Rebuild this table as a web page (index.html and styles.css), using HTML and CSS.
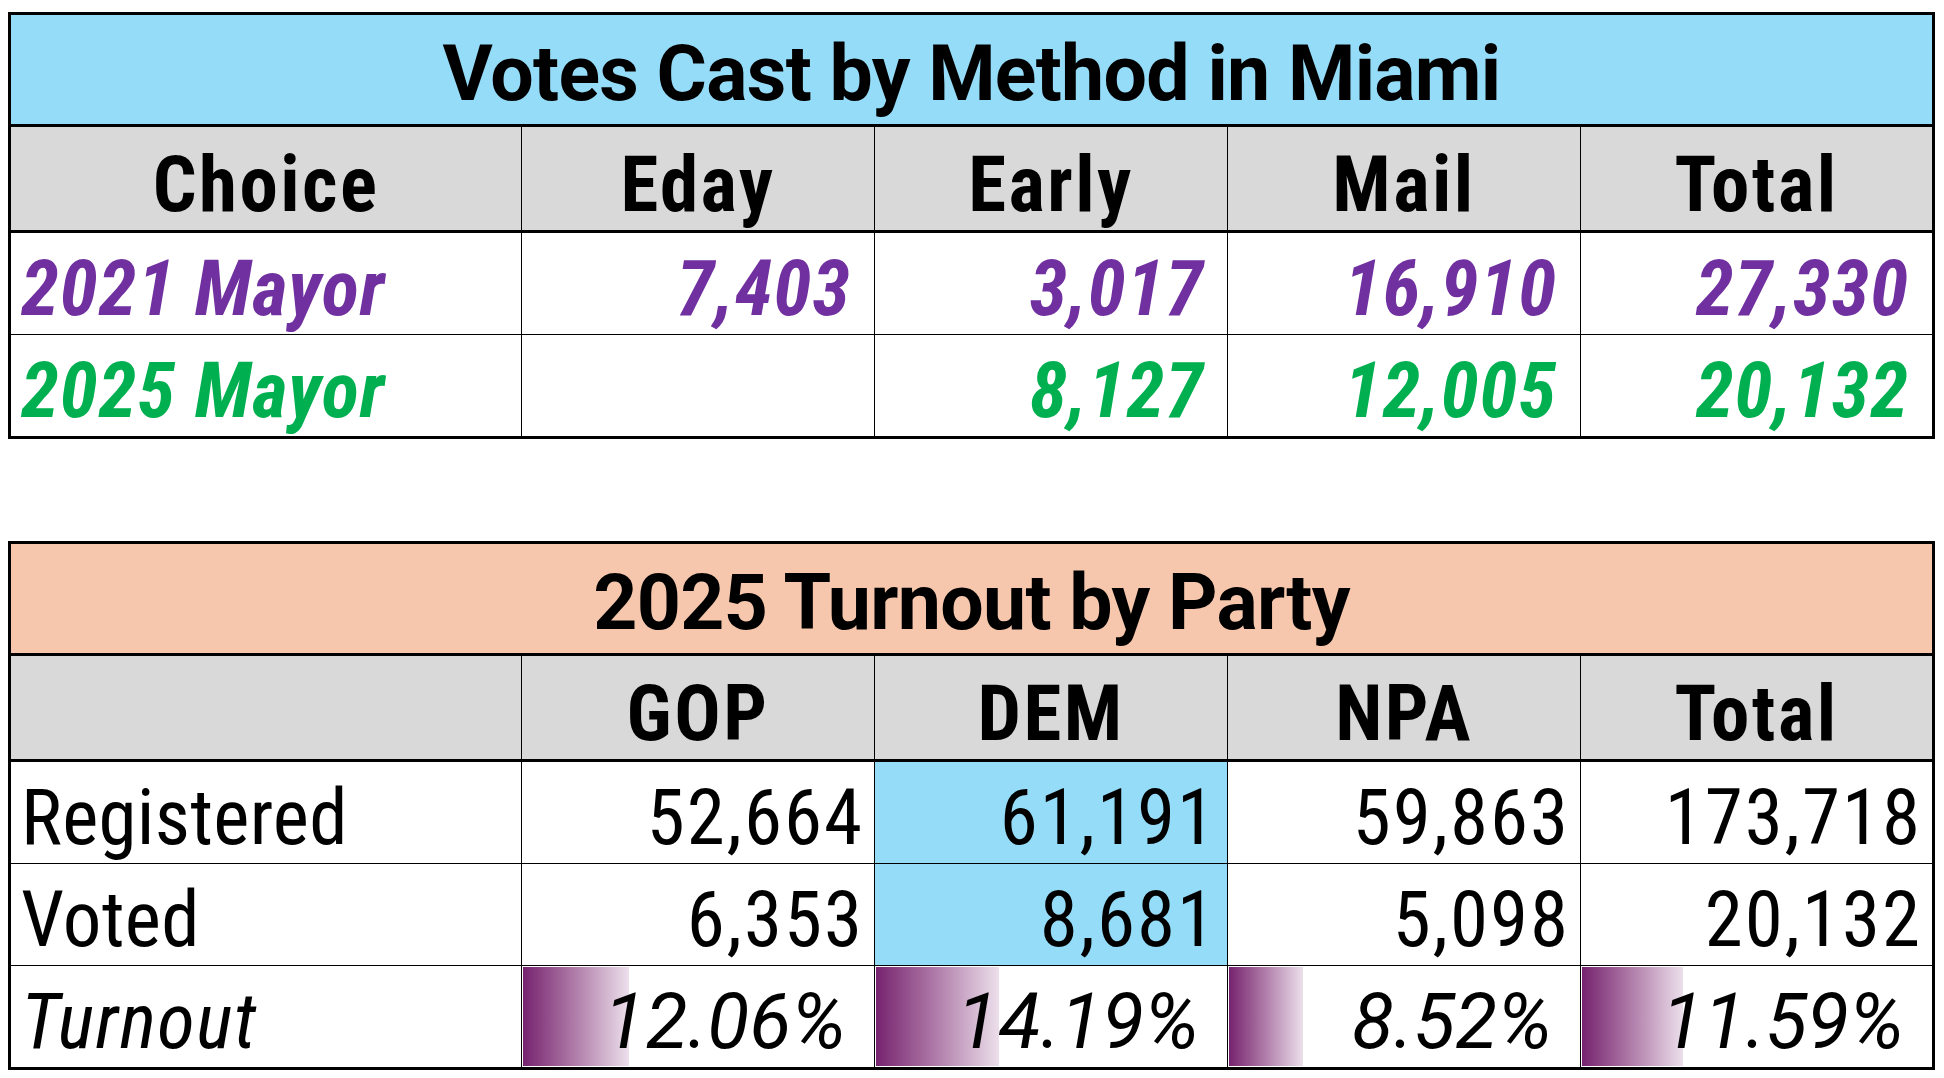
FILE: index.html
```html
<!DOCTYPE html>
<html lang="en">
<head>
<meta charset="utf-8">
<title>Votes Cast by Method in Miami</title>
<link rel="stylesheet" href="styles.css">
</head>
<body>
<div class="sheet">
  <div class="grid">
    <div class="title blue">Votes Cast by Method in Miami</div>
    <div class="hd first">Choice</div>
    <div class="hd">Eday</div>
    <div class="hd">Early</div>
    <div class="hd">Mail</div>
    <div class="hd">Total</div>

    <div class="cell first lbl bi purple">2021 Mayor</div>
    <div class="cell num bi purple">7,403</div>
    <div class="cell num bi purple">3,017</div>
    <div class="cell num bi purple">16,910</div>
    <div class="cell num bi purple">27,330</div>

    <div class="cell first lbl bi green last">2025 Mayor</div>
    <div class="cell num bi green last"></div>
    <div class="cell num bi green last">8,127</div>
    <div class="cell num bi green last">12,005</div>
    <div class="cell num bi green last">20,132</div>
  </div>

  <div class="grid">
    <div class="title peach">2025 Turnout by Party</div>
    <div class="hd first"></div>
    <div class="hd">GOP</div>
    <div class="hd">DEM</div>
    <div class="hd">NPA</div>
    <div class="hd">Total</div>

    <div class="cell first lbl reg">Registered</div>
    <div class="cell num reg">52,664</div>
    <div class="cell num reg hl">61,191</div>
    <div class="cell num reg">59,863</div>
    <div class="cell num reg">173,718</div>

    <div class="cell first lbl reg">Voted</div>
    <div class="cell num reg">6,353</div>
    <div class="cell num reg hl">8,681</div>
    <div class="cell num reg">5,098</div>
    <div class="cell num reg">20,132</div>

    <div class="cell first lbl it last">Turnout</div>
    <div class="cell pct last"><span class="bar" style="width:106px"></span><span class="txt">12.06%</span></div>
    <div class="cell pct last"><span class="bar" style="width:123px"></span><span class="txt">14.19%</span></div>
    <div class="cell pct last"><span class="bar" style="width:74px"></span><span class="txt">8.52%</span></div>
    <div class="cell pct last"><span class="bar" style="width:101px"></span><span class="txt">11.59%</span></div>
  </div>
</div>
</body>
</html>
```
FILE: styles.css
```css
html, body {
  margin: 0;
  padding: 0;
  background: #ffffff;
}

.sheet {
  display: flex;
  flex-direction: column;
  gap: 102px;
  padding: 12px 0 0 8px;
  font-family: "Roboto", "Liberation Sans", sans-serif;
  color: #000;
}

.grid {
  display: grid;
  grid-template-columns: 510px 353px 353px 353px 352px;
  width: fit-content;
  border: 3px solid #000;
}

.title {
  grid-column: 1 / -1;
  height: 112px;
  box-sizing: border-box;
  border-bottom: 3px solid #000;
  display: flex;
  align-items: flex-end;
  justify-content: center;
  padding-bottom: 11px;
  font-size: 77px;
  font-weight: 700;
  font-stretch: 100%;
  letter-spacing: -0.7px;
  line-height: 1;
}
.title.blue { background: #95dcf8; }
.title.peach { background: #f6c7ac; }

.hd {
  height: 106px;
  box-sizing: border-box;
  border-bottom: 3px solid #000;
  border-left: 1px solid #000;
  background: #d9d9d9;
  display: flex;
  align-items: flex-end;
  justify-content: center;
  padding-bottom: 6px;
  font-size: 77px;
  font-weight: 700;
  font-stretch: 75%;
  letter-spacing: 2.5px;
  line-height: 1;
}
.hd.first { border-left: none; }

.cell {
  position: relative;
  height: 102px;
  box-sizing: border-box;
  border-left: 1px solid #000;
  border-bottom: 1px solid #000;
  display: flex;
  align-items: flex-end;
  justify-content: flex-end;
  font-size: 77px;
  line-height: 1;
  padding-bottom: 6px;
  overflow: hidden;
}
.cell.first { border-left: none; }
.cell.last { border-bottom: none; height: 101px; }

.lbl { justify-content: flex-start; padding-left: 10px; }

.bi { font-weight: 700; font-style: italic; font-stretch: 75%; letter-spacing: 1px; }
.reg { font-weight: 400; font-stretch: 75%; letter-spacing: 0.3px; }
.it { font-weight: 400; font-style: italic; font-stretch: 75%; letter-spacing: 1.5px; }

.num { padding-right: 23px; }
.reg.num { padding-right: 10px; letter-spacing: 2px; }

.pct { font-weight: 400; font-style: italic; font-stretch: 100%; padding-right: 28px; }

.purple { color: #7030a0; }
.green { color: #00b050; }
.hl { background: #95dcf8; }

.bar {
  position: absolute;
  left: 1px;
  top: 1px;
  bottom: 1px;
  background: linear-gradient(to right, #76236f 0%, #a56b9e 40%, #ecdfeb 100%);
}
.txt { position: relative; }
```
